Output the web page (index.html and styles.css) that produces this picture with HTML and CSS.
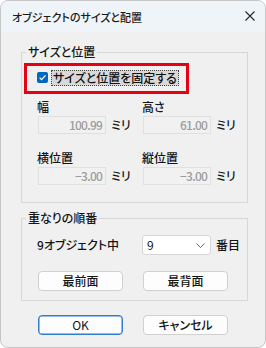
FILE: index.html
```html
<!DOCTYPE html>
<html lang="ja">
<head>
<meta charset="utf-8">
<link rel="stylesheet" href="styles.css">
</head>
<body>
<div class="window">
  <div class="titlebar">
    <span class="title">オブジェクトのサイズと配置</span>
    <svg class="close" width="10" height="10" viewBox="0 0 10 10"><path d="M0.5 0.5L9.5 9.5M9.5 0.5L0.5 9.5" stroke="#262626" stroke-width="1.1" fill="none"/></svg>
  </div>
  <div class="content">
    <fieldset class="group group-size">
      <legend>サイズと位置</legend>
      <div class="lockbox">
        <span class="check"><svg width="11" height="11" viewBox="0 0 11 11"><path d="M2.6 5.6L4.6 7.6L8.5 3.4" stroke="#fff" stroke-width="1.3" fill="none"/></svg></span>
        <span class="lock-text">サイズと位置を固定する</span>
      </div>
      <div class="fields">
        <div class="field">
          <div class="flabel">幅</div>
          <div class="frow"><div class="input">100.99</div><span class="unit">ミリ</span></div>
        </div>
        <div class="field">
          <div class="flabel">高さ</div>
          <div class="frow"><div class="input">61.00</div><span class="unit">ミリ</span></div>
        </div>
        <div class="field">
          <div class="flabel">横位置</div>
          <div class="frow"><div class="input">−3.00</div><span class="unit">ミリ</span></div>
        </div>
        <div class="field">
          <div class="flabel">縦位置</div>
          <div class="frow"><div class="input">−3.00</div><span class="unit">ミリ</span></div>
        </div>
      </div>
    </fieldset>
    <fieldset class="group group-order">
      <legend>重なりの順番</legend>
      <div class="order-row">
        <span class="order-label">9オブジェクト中</span>
        <div class="select"><span class="latin">9</span><svg width="9" height="5" viewBox="0 0 9 5"><path d="M0.5 0.5L4.5 4.5L8.5 0.5" stroke="#6b6b6b" stroke-width="1" fill="none"/></svg></div>
        <span class="order-suffix">番目</span>
      </div>
      <div class="btn-row">
        <div class="btn">最前面</div>
        <div class="btn">最背面</div>
      </div>
    </fieldset>
    <div class="actions">
      <div class="btn btn-default latin">OK</div>
      <div class="btn">キャンセル</div>
    </div>
  </div>
</div>
</body>
</html>
```

FILE: styles.css
```css
* { box-sizing: border-box; }
html, body { margin: 0; padding: 0; background: #ffffff; }
body {
  font-family: "Noto Sans CJK JP", "Noto Sans", sans-serif;
  font-feature-settings: "palt";
  font-size: 12px;
  font-weight: 500;
  color: #141414;
}
.latin { font-weight: 400; }
.window {
  width: 266px;
  height: 348px;
  border: 1px solid #c6c6c6;
  border-radius: 8px;
  background: #f0f0f0;
  overflow: hidden;
  display: flex;
  flex-direction: column;
}
.titlebar {
  height: 31px;
  flex: none;
  background: #eff4f9;
  display: flex;
  align-items: center;
  justify-content: space-between;
  padding: 1px 10px 0 11px;
}
.title { font-size: 11px; line-height: 14px; color: #1a1a1a; }
.close { display: block; margin-top: -3px; }
.content { padding: 13px 17px 0 20px; }
.group {
  margin: 0;
  min-width: 0;
  border: 1px solid #d7d7d7;
  padding: 4px 2px 17px 2px;
}
.group legend {
  padding: 0 2px;
  margin-left: 2px;
  line-height: 14px;
  font-size: 12px;
}
.lockbox {
  width: 165px;
  height: 31px;
  border: 3px solid #e50013;
  display: flex;
  align-items: center;
  padding: 0 0 2px 10px;
}
.check {
  width: 11px;
  height: 11px;
  border-radius: 2px;
  background: #0067c0;
  display: flex;
}
.check svg { display: block; }
.lock-text {
  margin-left: 3px;
  padding: 0 1px;
  line-height: 14px;
  border: 1px dotted #444;
  background: #d9d9d9;
  color: #111;
}
.fields {
  margin-top: 6px;
  padding-left: 13px;
  display: grid;
  grid-template-columns: 105px 105px;
  row-gap: 17px;
}
.flabel { line-height: 14px; }
.frow {
  margin-top: 2px;
  display: flex;
  align-items: center;
}
.input {
  width: 68px;
  height: 18px;
  margin-left: 1px;
  border: 1px solid #e0e0e0;
  background: #f1f1f1;
  color: #9c9c9c;
  text-align: right;
  padding-right: 3px;
  line-height: 16px;
  letter-spacing: -0.8px;
}
.unit { margin-left: 5px; line-height: 14px; }
.group-order { margin-top: 8px; padding: 10px 2px 9px 2px; }
.order-row {
  display: flex;
  align-items: center;
  padding-left: 13px;
}
.order-label { width: 105px; line-height: 14px; }
.select {
  width: 69px;
  height: 20px;
  border: 1px solid #d6d6d6;
  border-radius: 3px;
  background: #ffffff;
  display: flex;
  align-items: center;
  justify-content: space-between;
  padding: 0 5px 0 4px;
  line-height: 14px;
}
.order-suffix { margin-left: 5px; line-height: 14px; }
.btn-row {
  margin-top: 16px;
  padding-left: 14px;
  display: flex;
  gap: 20px;
}
.btn {
  width: 85px;
  height: 20px;
  border: 1px solid #d0d0d0;
  border-radius: 4px;
  background: #fdfdfd;
  display: flex;
  align-items: center;
  justify-content: center;
  line-height: 14px;
}
.actions {
  margin-top: 14px;
  padding-left: 17px;
  display: flex;
  gap: 20px;
}
.btn-default { border-color: #2f7dd3; box-shadow: inset 0 0 0 0.5px #2f7dd3; }
```
